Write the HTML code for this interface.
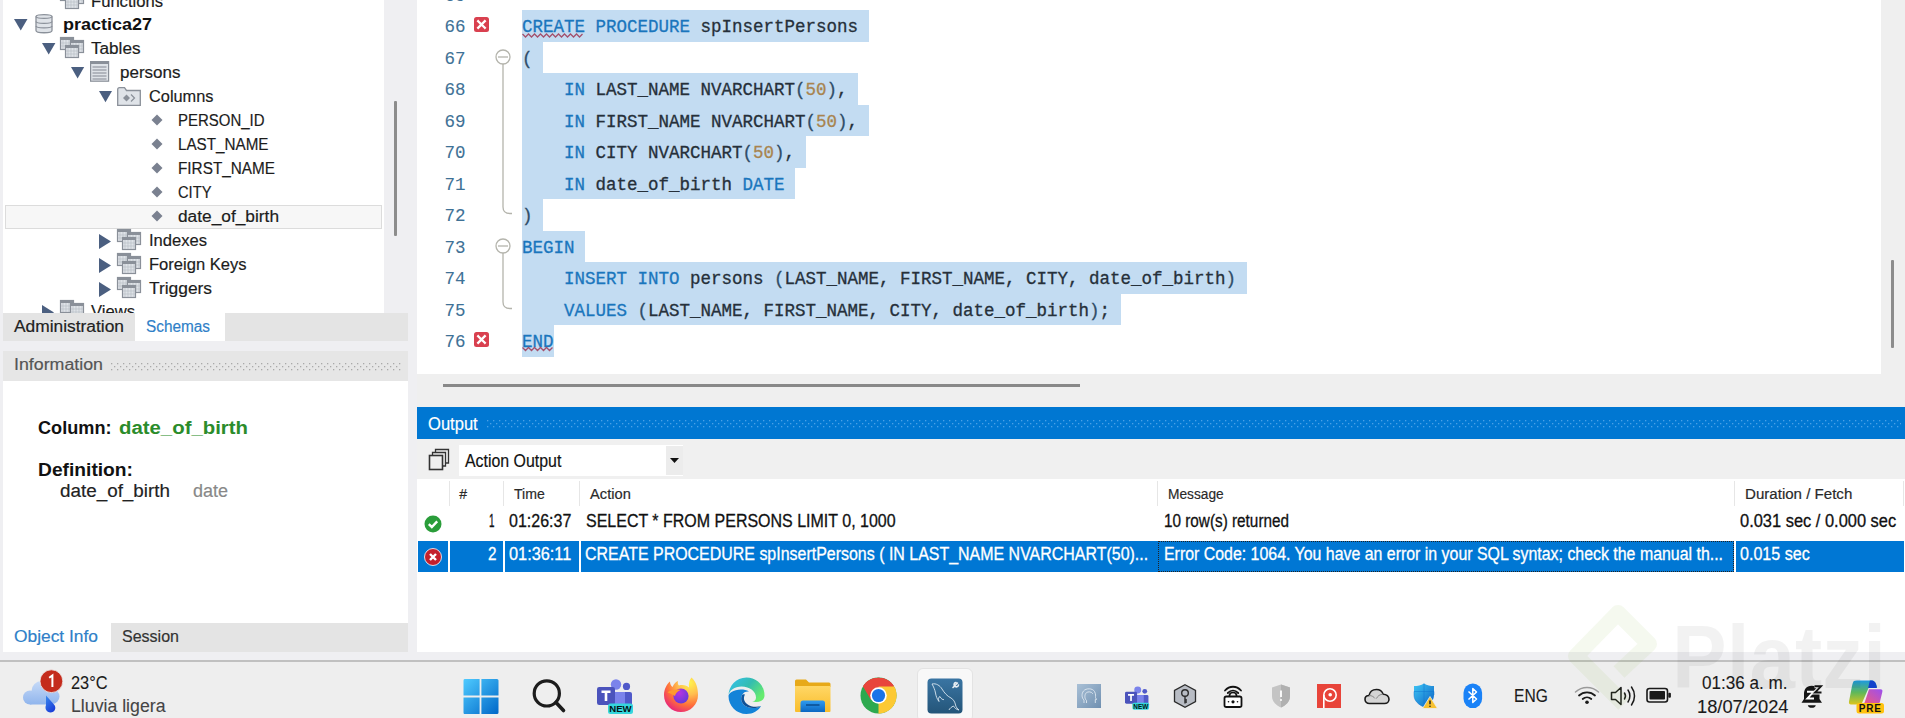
<!DOCTYPE html>
<html><head><meta charset="utf-8">
<style>
*{margin:0;padding:0;box-sizing:border-box}
html,body{width:1905px;height:718px;overflow:hidden;background:#efeff2;font-family:"Liberation Sans",sans-serif;position:relative}
.a{position:absolute}
.t{position:absolute;white-space:pre;line-height:1;-webkit-text-stroke:0.18px currentColor}
svg{position:absolute;overflow:visible}
</style></head>
<body>
<div class="a" style="left:3px;top:0px;width:381px;height:313px;background:#ffffff;"></div>
<div class="a" style="left:5px;top:205px;width:377px;height:24px;background:#f7f7f7;border:1px solid #dcdcdc"></div>
<div class="a" style="left:394px;top:101px;width:3px;height:135px;background:#8c8c8c;border-radius:1px"></div>
<div class="a" style="left:3px;top:313px;width:405px;height:28px;background:#e4e4e4;"></div>
<div class="a" style="left:135px;top:313px;width:90px;height:28px;background:#ffffff;"></div>
<div class="a" style="left:3px;top:351px;width:405px;height:30px;background:#e6e6e6;"></div>
<svg style="left:111px;top:362.5px" width="290" height="8"><defs><pattern id="dpi" width="6" height="6" patternUnits="userSpaceOnUse"><rect x="0" y="0" width="1.3" height="1.3" fill="#a9a9a9"/><rect x="3" y="3" width="1.3" height="1.3" fill="#a9a9a9"/></pattern></defs><rect width="290" height="8" fill="url(#dpi)"/></svg>
<div class="a" style="left:3px;top:381px;width:405px;height:242px;background:#ffffff;"></div>
<div class="a" style="left:3px;top:623px;width:108px;height:29px;background:#ffffff;"></div>
<div class="a" style="left:111px;top:623px;width:297px;height:29px;background:#e4e4e4;"></div>
<div class="a" style="left:417px;top:0px;width:1488px;height:407px;background:#efefef;"></div>
<div class="a" style="left:417px;top:0px;width:1464px;height:374px;background:#ffffff;"></div>
<div class="a" style="left:1891px;top:260px;width:3px;height:88px;background:#8c8c8c;border-radius:1px"></div>
<div class="a" style="left:443px;top:384px;width:637px;height:3px;background:#888888;"></div>
<div class="a" style="left:417px;top:407px;width:1488px;height:31.5px;background:#0077d2;"></div>
<svg style="left:486.5px;top:419.5px" width="1414" height="8"><defs><pattern id="dpo" width="6" height="6" patternUnits="userSpaceOnUse"><rect x="0" y="0" width="1.3" height="1.3" fill="#4ba1e6"/><rect x="3" y="3" width="1.3" height="1.3" fill="#4ba1e6"/></pattern></defs><rect width="1414" height="8" fill="url(#dpo)"/></svg>
<div class="a" style="left:417px;top:439px;width:1488px;height:40px;background:#f0f0f0;"></div>
<div class="a" style="left:459px;top:445px;width:224px;height:31px;background:#ffffff;"></div>
<div class="a" style="left:666px;top:446px;width:17px;height:29px;background:#ececec;"></div>
<svg style="left:670px;top:458px" width="9" height="5"><path d="M0 0H9L4.5 5Z" fill="#111"/></svg>
<div class="a" style="left:417px;top:479px;width:1488px;height:173px;background:#ffffff;"></div>
<div class="a" style="left:0px;top:660px;width:1905px;height:58px;background:#eeeeee;"></div>
<div class="a" style="left:0px;top:660px;width:1905px;height:2px;background:#c0c0c0;"></div>
<span id="t0" class="t" style="left:91px;top:-5.80px;font-family:'Liberation Sans', sans-serif;font-size:16px;font-weight:400;color:#1c1c1c;transform:scaleX(1.0378);transform-origin:0 0;">Functions</span>
<span id="t1" class="t" style="left:63px;top:17.40px;font-family:'Liberation Sans', sans-serif;font-size:16px;font-weight:700;color:#111;transform:scaleX(1.1241);transform-origin:0 0;-webkit-text-stroke:0;">practica27</span>
<span id="t2" class="t" style="left:91px;top:40.90px;font-family:'Liberation Sans', sans-serif;font-size:16px;font-weight:400;color:#1c1c1c;transform:scaleX(1.0703);transform-origin:0 0;">Tables</span>
<span id="t3" class="t" style="left:120px;top:64.90px;font-family:'Liberation Sans', sans-serif;font-size:16px;font-weight:400;color:#1c1c1c;transform:scaleX(1.0629);transform-origin:0 0;">persons</span>
<span id="t4" class="t" style="left:149px;top:88.90px;font-family:'Liberation Sans', sans-serif;font-size:16px;font-weight:400;color:#1c1c1c;transform:scaleX(1.0215);transform-origin:0 0;">Columns</span>
<span id="t5" class="t" style="left:177.5px;top:113.20px;font-family:'Liberation Sans', sans-serif;font-size:16px;font-weight:400;color:#1c1c1c;transform:scaleX(0.9355);transform-origin:0 0;">PERSON_ID</span>
<span id="t6" class="t" style="left:177.5px;top:137.20px;font-family:'Liberation Sans', sans-serif;font-size:16px;font-weight:400;color:#1c1c1c;transform:scaleX(0.9512);transform-origin:0 0;">LAST_NAME</span>
<span id="t7" class="t" style="left:177.5px;top:161.20px;font-family:'Liberation Sans', sans-serif;font-size:16px;font-weight:400;color:#1c1c1c;transform:scaleX(0.9571);transform-origin:0 0;">FIRST_NAME</span>
<span id="t8" class="t" style="left:177.5px;top:185.20px;font-family:'Liberation Sans', sans-serif;font-size:16px;font-weight:400;color:#1c1c1c;transform:scaleX(0.9190);transform-origin:0 0;">CITY</span>
<span id="t9" class="t" style="left:177.5px;top:209.20px;font-family:'Liberation Sans', sans-serif;font-size:16px;font-weight:400;color:#1c1c1c;transform:scaleX(1.0813);transform-origin:0 0;">date_of_birth</span>
<span id="t10" class="t" style="left:149px;top:233.20px;font-family:'Liberation Sans', sans-serif;font-size:16px;font-weight:400;color:#1c1c1c;transform:scaleX(1.0348);transform-origin:0 0;">Indexes</span>
<span id="t11" class="t" style="left:149px;top:257.20px;font-family:'Liberation Sans', sans-serif;font-size:16px;font-weight:400;color:#1c1c1c;transform:scaleX(1.0343);transform-origin:0 0;">Foreign Keys</span>
<span id="t12" class="t" style="left:149px;top:281.20px;font-family:'Liberation Sans', sans-serif;font-size:16px;font-weight:400;color:#1c1c1c;transform:scaleX(1.0845);transform-origin:0 0;">Triggers</span>
<span id="t13" class="t" style="left:13.5px;top:318.70px;font-family:'Liberation Sans', sans-serif;font-size:16px;font-weight:400;color:#222;transform:scaleX(1.0851);transform-origin:0 0;">Administration</span>
<span id="t14" class="t" style="left:146px;top:318.70px;font-family:'Liberation Sans', sans-serif;font-size:16px;font-weight:400;color:#2f7fc8;transform:scaleX(0.9595);transform-origin:0 0;">Schemas</span>
<span id="t15" class="t" style="left:14px;top:357.40px;font-family:'Liberation Sans', sans-serif;font-size:16px;font-weight:400;color:#555;transform:scaleX(1.1118);transform-origin:0 0;">Information</span>
<span id="t16" class="t" style="left:38px;top:419.00px;font-family:'Liberation Sans', sans-serif;font-size:18px;font-weight:700;color:#111;transform:scaleX(1.0071);transform-origin:0 0;-webkit-text-stroke:0;">Column:</span>
<span id="t17" class="t" style="left:119px;top:419.00px;font-family:'Liberation Sans', sans-serif;font-size:18px;font-weight:700;color:#2b8c2b;transform:scaleX(1.1314);transform-origin:0 0;-webkit-text-stroke:0;">date_of_birth</span>
<span id="t18" class="t" style="left:38px;top:460.70px;font-family:'Liberation Sans', sans-serif;font-size:18px;font-weight:700;color:#111;transform:scaleX(1.0676);transform-origin:0 0;-webkit-text-stroke:0;">Definition:</span>
<span id="t19" class="t" style="left:60px;top:481.70px;font-family:'Liberation Sans', sans-serif;font-size:18px;font-weight:400;color:#222;transform:scaleX(1.0467);transform-origin:0 0;">date_of_birth</span>
<span id="t20" class="t" style="left:193px;top:481.70px;font-family:'Liberation Sans', sans-serif;font-size:18px;font-weight:400;color:#888;transform:scaleX(0.9987);transform-origin:0 0;">date</span>
<span id="t21" class="t" style="left:14.3px;top:629.40px;font-family:'Liberation Sans', sans-serif;font-size:16px;font-weight:400;color:#2f7fc8;transform:scaleX(1.0856);transform-origin:0 0;">Object Info</span>
<span id="t22" class="t" style="left:122px;top:629.40px;font-family:'Liberation Sans', sans-serif;font-size:16px;font-weight:400;color:#333;transform:scaleX(1.0014);transform-origin:0 0;">Session</span>
<div class="a" style="left:522px;top:10.0px;width:346.5px;height:31.5px;background:#c3dcf2;"></div>
<div class="a" style="left:522px;top:41.5px;width:21.0px;height:31.5px;background:#c3dcf2;"></div>
<div class="a" style="left:522px;top:73.0px;width:336.0px;height:31.5px;background:#c3dcf2;"></div>
<div class="a" style="left:522px;top:104.5px;width:346.5px;height:31.5px;background:#c3dcf2;"></div>
<div class="a" style="left:522px;top:136.0px;width:283.5px;height:31.5px;background:#c3dcf2;"></div>
<div class="a" style="left:522px;top:167.5px;width:273.0px;height:31.5px;background:#c3dcf2;"></div>
<div class="a" style="left:522px;top:199.0px;width:21.0px;height:31.5px;background:#c3dcf2;"></div>
<div class="a" style="left:522px;top:230.5px;width:63.0px;height:31.5px;background:#c3dcf2;"></div>
<div class="a" style="left:522px;top:262.0px;width:724.5px;height:31.5px;background:#c3dcf2;"></div>
<div class="a" style="left:522px;top:293.5px;width:598.5px;height:31.5px;background:#c3dcf2;"></div>
<div class="a" style="left:522px;top:325.0px;width:31.5px;height:31.5px;background:#c3dcf2;"></div>
<span id="t23" class="t" style="left:444.5px;top:19.00px;font-family:'Liberation Mono', monospace;font-size:17.5px;font-weight:400;color:#3e7196;-webkit-text-stroke:0.1px currentColor">66</span>
<span id="t24" class="t" style="left:522.0px;top:19.00px;font-family:'Liberation Mono', monospace;font-size:17.5px;font-weight:400;color:#1a76bd;-webkit-text-stroke:0.3px currentColor">CREATE</span>
<span id="t25" class="t" style="left:595.5px;top:19.00px;font-family:'Liberation Mono', monospace;font-size:17.5px;font-weight:400;color:#1a76bd;-webkit-text-stroke:0.3px currentColor">PROCEDURE</span>
<span id="t26" class="t" style="left:690.0px;top:19.00px;font-family:'Liberation Mono', monospace;font-size:17.5px;font-weight:400;color:#26303a;-webkit-text-stroke:0.3px currentColor"> spInsertPersons</span>
<span id="t27" class="t" style="left:444.5px;top:50.50px;font-family:'Liberation Mono', monospace;font-size:17.5px;font-weight:400;color:#3e7196;-webkit-text-stroke:0.1px currentColor">67</span>
<span id="t28" class="t" style="left:522.0px;top:50.50px;font-family:'Liberation Mono', monospace;font-size:17.5px;font-weight:400;color:#2f4d68;-webkit-text-stroke:0.3px currentColor">(</span>
<span id="t29" class="t" style="left:444.5px;top:82.00px;font-family:'Liberation Mono', monospace;font-size:17.5px;font-weight:400;color:#3e7196;-webkit-text-stroke:0.1px currentColor">68</span>
<span id="t30" class="t" style="left:564.0px;top:82.00px;font-family:'Liberation Mono', monospace;font-size:17.5px;font-weight:400;color:#1a76bd;-webkit-text-stroke:0.3px currentColor">IN</span>
<span id="t31" class="t" style="left:585.0px;top:82.00px;font-family:'Liberation Mono', monospace;font-size:17.5px;font-weight:400;color:#26303a;-webkit-text-stroke:0.3px currentColor"> LAST_NAME NVARCHART</span>
<span id="t32" class="t" style="left:795.0px;top:82.00px;font-family:'Liberation Mono', monospace;font-size:17.5px;font-weight:400;color:#2f4d68;-webkit-text-stroke:0.3px currentColor">(</span>
<span id="t33" class="t" style="left:805.5px;top:82.00px;font-family:'Liberation Mono', monospace;font-size:17.5px;font-weight:400;color:#a8844f;-webkit-text-stroke:0.3px currentColor">50</span>
<span id="t34" class="t" style="left:826.5px;top:82.00px;font-family:'Liberation Mono', monospace;font-size:17.5px;font-weight:400;color:#2f4d68;-webkit-text-stroke:0.3px currentColor">)</span>
<span id="t35" class="t" style="left:837.0px;top:82.00px;font-family:'Liberation Mono', monospace;font-size:17.5px;font-weight:400;color:#26303a;-webkit-text-stroke:0.3px currentColor">,</span>
<span id="t36" class="t" style="left:444.5px;top:113.50px;font-family:'Liberation Mono', monospace;font-size:17.5px;font-weight:400;color:#3e7196;-webkit-text-stroke:0.1px currentColor">69</span>
<span id="t37" class="t" style="left:564.0px;top:113.50px;font-family:'Liberation Mono', monospace;font-size:17.5px;font-weight:400;color:#1a76bd;-webkit-text-stroke:0.3px currentColor">IN</span>
<span id="t38" class="t" style="left:585.0px;top:113.50px;font-family:'Liberation Mono', monospace;font-size:17.5px;font-weight:400;color:#26303a;-webkit-text-stroke:0.3px currentColor"> FIRST_NAME NVARCHART</span>
<span id="t39" class="t" style="left:805.5px;top:113.50px;font-family:'Liberation Mono', monospace;font-size:17.5px;font-weight:400;color:#2f4d68;-webkit-text-stroke:0.3px currentColor">(</span>
<span id="t40" class="t" style="left:816.0px;top:113.50px;font-family:'Liberation Mono', monospace;font-size:17.5px;font-weight:400;color:#a8844f;-webkit-text-stroke:0.3px currentColor">50</span>
<span id="t41" class="t" style="left:837.0px;top:113.50px;font-family:'Liberation Mono', monospace;font-size:17.5px;font-weight:400;color:#2f4d68;-webkit-text-stroke:0.3px currentColor">)</span>
<span id="t42" class="t" style="left:847.5px;top:113.50px;font-family:'Liberation Mono', monospace;font-size:17.5px;font-weight:400;color:#26303a;-webkit-text-stroke:0.3px currentColor">,</span>
<span id="t43" class="t" style="left:444.5px;top:145.00px;font-family:'Liberation Mono', monospace;font-size:17.5px;font-weight:400;color:#3e7196;-webkit-text-stroke:0.1px currentColor">70</span>
<span id="t44" class="t" style="left:564.0px;top:145.00px;font-family:'Liberation Mono', monospace;font-size:17.5px;font-weight:400;color:#1a76bd;-webkit-text-stroke:0.3px currentColor">IN</span>
<span id="t45" class="t" style="left:585.0px;top:145.00px;font-family:'Liberation Mono', monospace;font-size:17.5px;font-weight:400;color:#26303a;-webkit-text-stroke:0.3px currentColor"> CITY NVARCHART</span>
<span id="t46" class="t" style="left:742.5px;top:145.00px;font-family:'Liberation Mono', monospace;font-size:17.5px;font-weight:400;color:#2f4d68;-webkit-text-stroke:0.3px currentColor">(</span>
<span id="t47" class="t" style="left:753.0px;top:145.00px;font-family:'Liberation Mono', monospace;font-size:17.5px;font-weight:400;color:#a8844f;-webkit-text-stroke:0.3px currentColor">50</span>
<span id="t48" class="t" style="left:774.0px;top:145.00px;font-family:'Liberation Mono', monospace;font-size:17.5px;font-weight:400;color:#2f4d68;-webkit-text-stroke:0.3px currentColor">)</span>
<span id="t49" class="t" style="left:784.5px;top:145.00px;font-family:'Liberation Mono', monospace;font-size:17.5px;font-weight:400;color:#26303a;-webkit-text-stroke:0.3px currentColor">,</span>
<span id="t50" class="t" style="left:444.5px;top:176.50px;font-family:'Liberation Mono', monospace;font-size:17.5px;font-weight:400;color:#3e7196;-webkit-text-stroke:0.1px currentColor">71</span>
<span id="t51" class="t" style="left:564.0px;top:176.50px;font-family:'Liberation Mono', monospace;font-size:17.5px;font-weight:400;color:#1a76bd;-webkit-text-stroke:0.3px currentColor">IN</span>
<span id="t52" class="t" style="left:585.0px;top:176.50px;font-family:'Liberation Mono', monospace;font-size:17.5px;font-weight:400;color:#26303a;-webkit-text-stroke:0.3px currentColor"> date_of_birth </span>
<span id="t53" class="t" style="left:742.5px;top:176.50px;font-family:'Liberation Mono', monospace;font-size:17.5px;font-weight:400;color:#1a76bd;-webkit-text-stroke:0.3px currentColor">DATE</span>
<span id="t54" class="t" style="left:444.5px;top:208.00px;font-family:'Liberation Mono', monospace;font-size:17.5px;font-weight:400;color:#3e7196;-webkit-text-stroke:0.1px currentColor">72</span>
<span id="t55" class="t" style="left:522.0px;top:208.00px;font-family:'Liberation Mono', monospace;font-size:17.5px;font-weight:400;color:#2f4d68;-webkit-text-stroke:0.3px currentColor">)</span>
<span id="t56" class="t" style="left:444.5px;top:239.50px;font-family:'Liberation Mono', monospace;font-size:17.5px;font-weight:400;color:#3e7196;-webkit-text-stroke:0.1px currentColor">73</span>
<span id="t57" class="t" style="left:522.0px;top:239.50px;font-family:'Liberation Mono', monospace;font-size:17.5px;font-weight:400;color:#1a76bd;-webkit-text-stroke:0.3px currentColor">BEGIN</span>
<span id="t58" class="t" style="left:444.5px;top:271.00px;font-family:'Liberation Mono', monospace;font-size:17.5px;font-weight:400;color:#3e7196;-webkit-text-stroke:0.1px currentColor">74</span>
<span id="t59" class="t" style="left:564.0px;top:271.00px;font-family:'Liberation Mono', monospace;font-size:17.5px;font-weight:400;color:#1a76bd;-webkit-text-stroke:0.3px currentColor">INSERT</span>
<span id="t60" class="t" style="left:637.5px;top:271.00px;font-family:'Liberation Mono', monospace;font-size:17.5px;font-weight:400;color:#1a76bd;-webkit-text-stroke:0.3px currentColor">INTO</span>
<span id="t61" class="t" style="left:679.5px;top:271.00px;font-family:'Liberation Mono', monospace;font-size:17.5px;font-weight:400;color:#26303a;-webkit-text-stroke:0.3px currentColor"> persons </span>
<span id="t62" class="t" style="left:774.0px;top:271.00px;font-family:'Liberation Mono', monospace;font-size:17.5px;font-weight:400;color:#2f4d68;-webkit-text-stroke:0.3px currentColor">(</span>
<span id="t63" class="t" style="left:784.5px;top:271.00px;font-family:'Liberation Mono', monospace;font-size:17.5px;font-weight:400;color:#26303a;-webkit-text-stroke:0.3px currentColor">LAST_NAME, FIRST_NAME, CITY, date_of_birth</span>
<span id="t64" class="t" style="left:1225.5px;top:271.00px;font-family:'Liberation Mono', monospace;font-size:17.5px;font-weight:400;color:#2f4d68;-webkit-text-stroke:0.3px currentColor">)</span>
<span id="t65" class="t" style="left:444.5px;top:302.50px;font-family:'Liberation Mono', monospace;font-size:17.5px;font-weight:400;color:#3e7196;-webkit-text-stroke:0.1px currentColor">75</span>
<span id="t66" class="t" style="left:564.0px;top:302.50px;font-family:'Liberation Mono', monospace;font-size:17.5px;font-weight:400;color:#1a76bd;-webkit-text-stroke:0.3px currentColor">VALUES</span>
<span id="t67" class="t" style="left:637.5px;top:302.50px;font-family:'Liberation Mono', monospace;font-size:17.5px;font-weight:400;color:#2f4d68;-webkit-text-stroke:0.3px currentColor">(</span>
<span id="t68" class="t" style="left:648.0px;top:302.50px;font-family:'Liberation Mono', monospace;font-size:17.5px;font-weight:400;color:#26303a;-webkit-text-stroke:0.3px currentColor">LAST_NAME, FIRST_NAME, CITY, date_of_birth</span>
<span id="t69" class="t" style="left:1089.0px;top:302.50px;font-family:'Liberation Mono', monospace;font-size:17.5px;font-weight:400;color:#2f4d68;-webkit-text-stroke:0.3px currentColor">)</span>
<span id="t70" class="t" style="left:1099.5px;top:302.50px;font-family:'Liberation Mono', monospace;font-size:17.5px;font-weight:400;color:#26303a;-webkit-text-stroke:0.3px currentColor">;</span>
<span id="t71" class="t" style="left:444.5px;top:334.00px;font-family:'Liberation Mono', monospace;font-size:17.5px;font-weight:400;color:#3e7196;-webkit-text-stroke:0.1px currentColor">76</span>
<span id="t72" class="t" style="left:522.0px;top:334.00px;font-family:'Liberation Mono', monospace;font-size:17.5px;font-weight:400;color:#1a76bd;-webkit-text-stroke:0.3px currentColor">END</span>
<svg style="left:474px;top:17px" width="15" height="15"><rect x="0" y="0" width="15" height="15" rx="2.5" fill="#d9404f"/><path d="M4.2 4.2L10.8 10.8M10.8 4.2L4.2 10.8" stroke="#fff" stroke-width="2.3" stroke-linecap="square"/></svg>
<svg style="left:474px;top:332px" width="15" height="15"><rect x="0" y="0" width="15" height="15" rx="2.5" fill="#d9404f"/><path d="M4.2 4.2L10.8 10.8M10.8 4.2L4.2 10.8" stroke="#fff" stroke-width="2.3" stroke-linecap="square"/></svg>
<svg style="left:0;top:0" width="1" height="1"><path d="M522.5 34 L525.5 37 L528.5 34 L531.5 37 L534.5 34 L537.5 37 L540.5 34 L543.5 37 L546.5 34 L549.5 37 L552.5 34 L555.5 37 L558.5 34 L561.5 37 L564.5 34 L567.5 37 L570.5 34 L573.5 37 L576.5 34 L579.5 37 L582.5 34" fill="none" stroke="#a4506c" stroke-width="1.3"/></svg>
<svg style="left:0;top:0" width="1" height="1"><path d="M522.5 347.5 L525.5 350.5 L528.5 347.5 L531.5 350.5 L534.5 347.5 L537.5 350.5 L540.5 347.5 L543.5 350.5 L546.5 347.5 L549.5 350.5 L552.5 347.5" fill="none" stroke="#a4506c" stroke-width="1.3"/></svg>
<span id="t73" class="t" style="left:444.5px;top:-12.50px;font-family:'Liberation Mono', monospace;font-size:17.5px;font-weight:400;color:#3e7196;-webkit-text-stroke:0.1px currentColor">65</span>
<svg style="left:0;top:0" width="1" height="1"><circle cx="503" cy="57" r="7" fill="#fff" stroke="#b4b4ac" stroke-width="1.3"/><path d="M498 57H508" stroke="#b4b4ac" stroke-width="1.3"/><path d="M503 64V207Q503 213.5 510 213.5H512" fill="none" stroke="#b4b4ac" stroke-width="1.3"/><circle cx="503" cy="246" r="7" fill="#fff" stroke="#b4b4ac" stroke-width="1.3"/><path d="M498 246H508" stroke="#b4b4ac" stroke-width="1.3"/><path d="M503 253V302Q503 308.5 510 308.5H512" fill="none" stroke="#b4b4ac" stroke-width="1.3"/></svg>
<span id="t74" class="t" style="left:427.8px;top:415.10px;font-family:'Liberation Sans', sans-serif;font-size:18px;font-weight:400;color:#ffffff;transform:scaleX(0.9196);transform-origin:0 0;">Output</span>
<span id="t75" class="t" style="left:464.8px;top:451.90px;font-family:'Liberation Sans', sans-serif;font-size:18px;font-weight:400;color:#111;transform:scaleX(0.8829);transform-origin:0 0;">Action Output</span>
<div class="a" style="left:449px;top:481px;width:1px;height:25px;background:#e6e6e6;"></div>
<div class="a" style="left:503px;top:481px;width:1px;height:25px;background:#e6e6e6;"></div>
<div class="a" style="left:579px;top:481px;width:1px;height:25px;background:#e6e6e6;"></div>
<div class="a" style="left:1157px;top:481px;width:1px;height:25px;background:#e6e6e6;"></div>
<div class="a" style="left:1734px;top:481px;width:1px;height:25px;background:#e6e6e6;"></div>
<div class="a" style="left:1903px;top:481px;width:1px;height:25px;background:#e6e6e6;"></div>
<span id="t76" class="t" style="left:459.3px;top:486.60px;font-family:'Liberation Sans', sans-serif;font-size:14px;font-weight:400;color:#2a2a2a;">#</span>
<span id="t77" class="t" style="left:513.6px;top:486.60px;font-family:'Liberation Sans', sans-serif;font-size:14px;font-weight:400;color:#2a2a2a;transform:scaleX(1.0067);transform-origin:0 0;">Time</span>
<span id="t78" class="t" style="left:589.8px;top:486.60px;font-family:'Liberation Sans', sans-serif;font-size:14px;font-weight:400;color:#2a2a2a;transform:scaleX(1.0483);transform-origin:0 0;">Action</span>
<span id="t79" class="t" style="left:1167.7px;top:486.60px;font-family:'Liberation Sans', sans-serif;font-size:14px;font-weight:400;color:#2a2a2a;transform:scaleX(0.9804);transform-origin:0 0;">Message</span>
<span id="t80" class="t" style="left:1744.9px;top:486.60px;font-family:'Liberation Sans', sans-serif;font-size:14px;font-weight:400;color:#2a2a2a;transform:scaleX(1.0772);transform-origin:0 0;">Duration / Fetch</span>
<span id="t81" class="t" style="left:488.8px;top:511.70px;font-family:'Liberation Sans', sans-serif;font-size:18px;font-weight:400;color:#111;transform:scaleX(0.5491);transform-origin:0 0;-webkit-text-stroke:0.3px currentColor">1</span>
<span id="t82" class="t" style="left:508.7px;top:511.70px;font-family:'Liberation Sans', sans-serif;font-size:18px;font-weight:400;color:#111;transform:scaleX(0.8890);transform-origin:0 0;-webkit-text-stroke:0.3px currentColor">01:26:37</span>
<span id="t83" class="t" style="left:585.6px;top:511.70px;font-family:'Liberation Sans', sans-serif;font-size:18px;font-weight:400;color:#111;transform:scaleX(0.8885);transform-origin:0 0;-webkit-text-stroke:0.3px currentColor">SELECT * FROM PERSONS LIMIT 0, 1000</span>
<span id="t84" class="t" style="left:1163.5px;top:511.70px;font-family:'Liberation Sans', sans-serif;font-size:18px;font-weight:400;color:#111;transform:scaleX(0.8500);transform-origin:0 0;-webkit-text-stroke:0.3px currentColor">10 row(s) returned</span>
<span id="t85" class="t" style="left:1740px;top:511.70px;font-family:'Liberation Sans', sans-serif;font-size:18px;font-weight:400;color:#111;transform:scaleX(0.9128);transform-origin:0 0;-webkit-text-stroke:0.3px currentColor">0.031 sec / 0.000 sec</span>
<div class="a" style="left:418px;top:541px;width:1486px;height:31px;background:#0077d4;"></div>
<div class="a" style="left:448px;top:541px;width:2px;height:31px;background:#ffffff;"></div>
<div class="a" style="left:503px;top:541px;width:2px;height:31px;background:#ffffff;"></div>
<div class="a" style="left:579px;top:541px;width:2px;height:31px;background:#ffffff;"></div>
<div class="a" style="left:1734px;top:541px;width:2px;height:31px;background:#ffffff;"></div>
<div class="a" style="left:1158px;top:541px;width:576px;height:31px;border:1px dotted #222"></div>
<span id="t86" class="t" style="left:487.5px;top:545.00px;font-family:'Liberation Sans', sans-serif;font-size:18px;font-weight:400;color:#fff;transform:scaleX(0.8487);transform-origin:0 0;-webkit-text-stroke:0.3px currentColor">2</span>
<span id="t87" class="t" style="left:508.7px;top:545.00px;font-family:'Liberation Sans', sans-serif;font-size:18px;font-weight:400;color:#fff;transform:scaleX(0.9064);transform-origin:0 0;-webkit-text-stroke:0.3px currentColor">01:36:11</span>
<span id="t88" class="t" style="left:584.7px;top:545.00px;font-family:'Liberation Sans', sans-serif;font-size:18px;font-weight:400;color:#fff;transform:scaleX(0.8866);transform-origin:0 0;-webkit-text-stroke:0.3px currentColor">CREATE PROCEDURE spInsertPersons ( IN LAST_NAME NVARCHART(50)...</span>
<span id="t89" class="t" style="left:1163.5px;top:545.00px;font-family:'Liberation Sans', sans-serif;font-size:18px;font-weight:400;color:#fff;transform:scaleX(0.8835);transform-origin:0 0;-webkit-text-stroke:0.3px currentColor">Error Code: 1064. You have an error in your SQL syntax; check the manual th...</span>
<span id="t90" class="t" style="left:1740px;top:545.00px;font-family:'Liberation Sans', sans-serif;font-size:18px;font-weight:400;color:#fff;transform:scaleX(0.8929);transform-origin:0 0;-webkit-text-stroke:0.3px currentColor">0.015 sec</span>
<svg style="left:424px;top:515px" width="18" height="18"><circle cx="9" cy="9" r="8.5" fill="#2a9d3a"/><path d="M4.8 9.2L7.8 12L13.2 6.3" fill="none" stroke="#fff" stroke-width="2.4"/></svg>
<svg style="left:424px;top:548px" width="18" height="18"><circle cx="9" cy="9" r="8.5" fill="#c4202c" stroke="#fff" stroke-width="0.8"/><path d="M6 6L12 12M12 6L6 12" stroke="#fff" stroke-width="2.4"/></svg>
<svg style="left:428px;top:448px" width="22" height="23"><rect x="1.5" y="7.5" width="13" height="14" fill="none" stroke="#333" stroke-width="1.6"/><path d="M4.5 7V4.5H17.5V18H15" fill="none" stroke="#333" stroke-width="1.3"/><path d="M7.5 4V1.5H20.5V15H18" fill="none" stroke="#333" stroke-width="1.3"/></svg>
<span id="t91" class="t" style="left:70.5px;top:674.73px;font-family:'Liberation Sans', sans-serif;font-size:17.5px;font-weight:400;color:#1a1a1a;transform:scaleX(0.9333);transform-origin:0 0;-webkit-text-stroke:0.1px currentColor">23°C</span>
<span id="t92" class="t" style="left:70.5px;top:698.42px;font-family:'Liberation Sans', sans-serif;font-size:17.5px;font-weight:400;color:#444;transform:scaleX(1.0119);transform-origin:0 0;-webkit-text-stroke:0.1px currentColor">Lluvia ligera</span>
<span id="t93" class="t" style="left:1513.7px;top:687.92px;font-family:'Liberation Sans', sans-serif;font-size:17.5px;font-weight:400;color:#1a1a1a;transform:scaleX(0.8909);transform-origin:0 0;-webkit-text-stroke:0.1px currentColor">ENG</span>
<span id="t94" class="t" style="left:1702.4px;top:674.62px;font-family:'Liberation Sans', sans-serif;font-size:17.5px;font-weight:400;color:#1a1a1a;transform:scaleX(0.9776);transform-origin:0 0;-webkit-text-stroke:0.1px currentColor">01:36 a. m.</span>
<span id="t95" class="t" style="left:1696.5px;top:698.83px;font-family:'Liberation Sans', sans-serif;font-size:17.5px;font-weight:400;color:#1a1a1a;transform:scaleX(1.0446);transform-origin:0 0;-webkit-text-stroke:0.1px currentColor">18/07/2024</span>
<div class="a" style="left:0;top:0;width:384px;height:313px;overflow:hidden">
<svg style="left:13.5px;top:18.5px;" width="13.5" height="11.5" viewBox="0 0 13.5 11.5"><path d="M0 0H13.5L6.75 11.5Z" fill="#4b5f80"/></svg>
<svg style="left:42px;top:42.8px;" width="13.4" height="11.6" viewBox="0 0 13.4 11.6"><path d="M0 0H13.4L6.7 11.6Z" fill="#4b5f80"/></svg>
<svg style="left:70.5px;top:67px;" width="13.2" height="11.5" viewBox="0 0 13.2 11.5"><path d="M0 0H13.2L6.6 11.5Z" fill="#4b5f80"/></svg>
<svg style="left:99.2px;top:91px;" width="13" height="11.2" viewBox="0 0 13 11.2"><path d="M0 0H13L6.5 11.2Z" fill="#4b5f80"/></svg>
<svg style="left:99px;top:233.5px;" width="12" height="15" viewBox="0 0 12 15"><path d="M0 0L12 7.5L0 15Z" fill="#4b5f80"/></svg>
<svg style="left:99px;top:257.5px;" width="12" height="15" viewBox="0 0 12 15"><path d="M0 0L12 7.5L0 15Z" fill="#4b5f80"/></svg>
<svg style="left:99px;top:281.5px;" width="12" height="15" viewBox="0 0 12 15"><path d="M0 0L12 7.5L0 15Z" fill="#4b5f80"/></svg>
<svg style="left:42px;top:305px;" width="12" height="15" viewBox="0 0 12 15"><path d="M0 0L12 7.5L0 15Z" fill="#4b5f80"/></svg>
<svg style="left:60px;top:-12px;" width="24" height="21" viewBox="0 0 24 21"><rect x="0.5" y="0.5" width="13" height="12" fill="#dfe3e8" stroke="#8a9099" stroke-width="1.2"/><rect x="0" y="0" width="14" height="3" fill="#8a9099"/><path d="M1 6H13" stroke="#b9bec6" stroke-width="0.7"/><path d="M1 9H13" stroke="#b9bec6" stroke-width="0.7"/><path d="M3 3V12" stroke="#b9bec6" stroke-width="0.7"/><path d="M6 3V12" stroke="#b9bec6" stroke-width="0.7"/><path d="M9 3V12" stroke="#b9bec6" stroke-width="0.7"/><path d="M12 3V12" stroke="#b9bec6" stroke-width="0.7"/><rect x="10.5" y="3.5" width="13" height="12" fill="#dfe3e8" stroke="#8a9099" stroke-width="1.2"/><rect x="10" y="3" width="14" height="3" fill="#8a9099"/><path d="M11 9H23" stroke="#b9bec6" stroke-width="0.7"/><path d="M11 12H23" stroke="#b9bec6" stroke-width="0.7"/><path d="M13 6V15" stroke="#b9bec6" stroke-width="0.7"/><path d="M16 6V15" stroke="#b9bec6" stroke-width="0.7"/><path d="M19 6V15" stroke="#b9bec6" stroke-width="0.7"/><path d="M22 6V15" stroke="#b9bec6" stroke-width="0.7"/><rect x="5.5" y="8.5" width="13" height="12" fill="#dfe3e8" stroke="#8a9099" stroke-width="1.2"/><rect x="5" y="8" width="14" height="3" fill="#8a9099"/><path d="M6 14H18" stroke="#b9bec6" stroke-width="0.7"/><path d="M6 17H18" stroke="#b9bec6" stroke-width="0.7"/><path d="M8 11V20" stroke="#b9bec6" stroke-width="0.7"/><path d="M11 11V20" stroke="#b9bec6" stroke-width="0.7"/><path d="M14 11V20" stroke="#b9bec6" stroke-width="0.7"/><path d="M17 11V20" stroke="#b9bec6" stroke-width="0.7"/></svg>
<svg style="left:34.5px;top:12.5px;" width="18" height="21" viewBox="0 0 18 21"><path d="M1 3.5C1 1 17 1 17 3.5V17.5C17 20.5 1 20.5 1 17.5Z" fill="#dfe3e8" stroke="#8a9099" stroke-width="1.3"/><path d="M1 3.5C1 6 17 6 17 3.5M1 8.5C1 11 17 11 17 8.5M1 13C1 15.5 17 15.5 17 13" fill="none" stroke="#8a9099" stroke-width="1.2"/></svg>
<svg style="left:60px;top:37px;" width="24" height="21" viewBox="0 0 24 21"><rect x="0.5" y="0.5" width="13" height="12" fill="#dfe3e8" stroke="#8a9099" stroke-width="1.2"/><rect x="0" y="0" width="14" height="3" fill="#8a9099"/><path d="M1 6H13" stroke="#b9bec6" stroke-width="0.7"/><path d="M1 9H13" stroke="#b9bec6" stroke-width="0.7"/><path d="M3 3V12" stroke="#b9bec6" stroke-width="0.7"/><path d="M6 3V12" stroke="#b9bec6" stroke-width="0.7"/><path d="M9 3V12" stroke="#b9bec6" stroke-width="0.7"/><path d="M12 3V12" stroke="#b9bec6" stroke-width="0.7"/><rect x="10.5" y="3.5" width="13" height="12" fill="#dfe3e8" stroke="#8a9099" stroke-width="1.2"/><rect x="10" y="3" width="14" height="3" fill="#8a9099"/><path d="M11 9H23" stroke="#b9bec6" stroke-width="0.7"/><path d="M11 12H23" stroke="#b9bec6" stroke-width="0.7"/><path d="M13 6V15" stroke="#b9bec6" stroke-width="0.7"/><path d="M16 6V15" stroke="#b9bec6" stroke-width="0.7"/><path d="M19 6V15" stroke="#b9bec6" stroke-width="0.7"/><path d="M22 6V15" stroke="#b9bec6" stroke-width="0.7"/><rect x="5.5" y="8.5" width="13" height="12" fill="#dfe3e8" stroke="#8a9099" stroke-width="1.2"/><rect x="5" y="8" width="14" height="3" fill="#8a9099"/><path d="M6 14H18" stroke="#b9bec6" stroke-width="0.7"/><path d="M6 17H18" stroke="#b9bec6" stroke-width="0.7"/><path d="M8 11V20" stroke="#b9bec6" stroke-width="0.7"/><path d="M11 11V20" stroke="#b9bec6" stroke-width="0.7"/><path d="M14 11V20" stroke="#b9bec6" stroke-width="0.7"/><path d="M17 11V20" stroke="#b9bec6" stroke-width="0.7"/></svg>
<svg style="left:90.2px;top:61px;" width="19" height="21" viewBox="0 0 19 21"><rect x="0.6" y="0.6" width="18" height="19.6" fill="#dfe3e8" stroke="#8a9099" stroke-width="1.2"/><rect x="0" y="0" width="19" height="3" fill="#8a9099"/><path d="M2.5 6H16.5" stroke="#8a9099" stroke-width="1.1"/><path d="M2.5 9H16.5" stroke="#8a9099" stroke-width="1.1"/><path d="M2.5 12H16.5" stroke="#8a9099" stroke-width="1.1"/><path d="M2.5 15H16.5" stroke="#8a9099" stroke-width="1.1"/><path d="M2.5 18H16.5" stroke="#8a9099" stroke-width="1.1"/></svg>
<svg style="left:117px;top:86.5px;" width="24" height="19" viewBox="0 0 24 19"><path d="M0.7 2.5Q0.7 0.7 2.5 0.7H7.5L9.5 3.5H23.3V18.3H0.7Z" fill="#dfe3e8" stroke="#8a9099" stroke-width="1.3"/><path d="M6 11L9.5 7.5L13 11L9.5 14.5Z" fill="#8a9099"/><path d="M14 7.5L17.5 11L14 14.5" fill="none" stroke="#8a9099" stroke-width="1.2"/></svg>
<svg style="left:150.5px;top:114px;" width="12" height="12" viewBox="0 0 12 12"><path d="M6 0.5L11.5 6L6 11.5L0.5 6Z" fill="#7a8190"/></svg>
<svg style="left:150.5px;top:138px;" width="12" height="12" viewBox="0 0 12 12"><path d="M6 0.5L11.5 6L6 11.5L0.5 6Z" fill="#7a8190"/></svg>
<svg style="left:150.5px;top:162px;" width="12" height="12" viewBox="0 0 12 12"><path d="M6 0.5L11.5 6L6 11.5L0.5 6Z" fill="#7a8190"/></svg>
<svg style="left:150.5px;top:186px;" width="12" height="12" viewBox="0 0 12 12"><path d="M6 0.5L11.5 6L6 11.5L0.5 6Z" fill="#7a8190"/></svg>
<svg style="left:150.5px;top:210px;" width="12" height="12" viewBox="0 0 12 12"><path d="M6 0.5L11.5 6L6 11.5L0.5 6Z" fill="#7a8190"/></svg>
<svg style="left:117px;top:229px;" width="24" height="21" viewBox="0 0 24 21"><rect x="0.5" y="0.5" width="13" height="12" fill="#dfe3e8" stroke="#8a9099" stroke-width="1.2"/><rect x="0" y="0" width="14" height="3" fill="#8a9099"/><path d="M1 6H13" stroke="#b9bec6" stroke-width="0.7"/><path d="M1 9H13" stroke="#b9bec6" stroke-width="0.7"/><path d="M3 3V12" stroke="#b9bec6" stroke-width="0.7"/><path d="M6 3V12" stroke="#b9bec6" stroke-width="0.7"/><path d="M9 3V12" stroke="#b9bec6" stroke-width="0.7"/><path d="M12 3V12" stroke="#b9bec6" stroke-width="0.7"/><rect x="10.5" y="3.5" width="13" height="12" fill="#dfe3e8" stroke="#8a9099" stroke-width="1.2"/><rect x="10" y="3" width="14" height="3" fill="#8a9099"/><path d="M11 9H23" stroke="#b9bec6" stroke-width="0.7"/><path d="M11 12H23" stroke="#b9bec6" stroke-width="0.7"/><path d="M13 6V15" stroke="#b9bec6" stroke-width="0.7"/><path d="M16 6V15" stroke="#b9bec6" stroke-width="0.7"/><path d="M19 6V15" stroke="#b9bec6" stroke-width="0.7"/><path d="M22 6V15" stroke="#b9bec6" stroke-width="0.7"/><rect x="5.5" y="8.5" width="13" height="12" fill="#dfe3e8" stroke="#8a9099" stroke-width="1.2"/><rect x="5" y="8" width="14" height="3" fill="#8a9099"/><path d="M6 14H18" stroke="#b9bec6" stroke-width="0.7"/><path d="M6 17H18" stroke="#b9bec6" stroke-width="0.7"/><path d="M8 11V20" stroke="#b9bec6" stroke-width="0.7"/><path d="M11 11V20" stroke="#b9bec6" stroke-width="0.7"/><path d="M14 11V20" stroke="#b9bec6" stroke-width="0.7"/><path d="M17 11V20" stroke="#b9bec6" stroke-width="0.7"/></svg>
<svg style="left:117px;top:253px;" width="24" height="21" viewBox="0 0 24 21"><rect x="0.5" y="0.5" width="13" height="12" fill="#dfe3e8" stroke="#8a9099" stroke-width="1.2"/><rect x="0" y="0" width="14" height="3" fill="#8a9099"/><path d="M1 6H13" stroke="#b9bec6" stroke-width="0.7"/><path d="M1 9H13" stroke="#b9bec6" stroke-width="0.7"/><path d="M3 3V12" stroke="#b9bec6" stroke-width="0.7"/><path d="M6 3V12" stroke="#b9bec6" stroke-width="0.7"/><path d="M9 3V12" stroke="#b9bec6" stroke-width="0.7"/><path d="M12 3V12" stroke="#b9bec6" stroke-width="0.7"/><rect x="10.5" y="3.5" width="13" height="12" fill="#dfe3e8" stroke="#8a9099" stroke-width="1.2"/><rect x="10" y="3" width="14" height="3" fill="#8a9099"/><path d="M11 9H23" stroke="#b9bec6" stroke-width="0.7"/><path d="M11 12H23" stroke="#b9bec6" stroke-width="0.7"/><path d="M13 6V15" stroke="#b9bec6" stroke-width="0.7"/><path d="M16 6V15" stroke="#b9bec6" stroke-width="0.7"/><path d="M19 6V15" stroke="#b9bec6" stroke-width="0.7"/><path d="M22 6V15" stroke="#b9bec6" stroke-width="0.7"/><rect x="5.5" y="8.5" width="13" height="12" fill="#dfe3e8" stroke="#8a9099" stroke-width="1.2"/><rect x="5" y="8" width="14" height="3" fill="#8a9099"/><path d="M6 14H18" stroke="#b9bec6" stroke-width="0.7"/><path d="M6 17H18" stroke="#b9bec6" stroke-width="0.7"/><path d="M8 11V20" stroke="#b9bec6" stroke-width="0.7"/><path d="M11 11V20" stroke="#b9bec6" stroke-width="0.7"/><path d="M14 11V20" stroke="#b9bec6" stroke-width="0.7"/><path d="M17 11V20" stroke="#b9bec6" stroke-width="0.7"/></svg>
<svg style="left:117px;top:277px;" width="24" height="21" viewBox="0 0 24 21"><rect x="0.5" y="0.5" width="13" height="12" fill="#dfe3e8" stroke="#8a9099" stroke-width="1.2"/><rect x="0" y="0" width="14" height="3" fill="#8a9099"/><path d="M1 6H13" stroke="#b9bec6" stroke-width="0.7"/><path d="M1 9H13" stroke="#b9bec6" stroke-width="0.7"/><path d="M3 3V12" stroke="#b9bec6" stroke-width="0.7"/><path d="M6 3V12" stroke="#b9bec6" stroke-width="0.7"/><path d="M9 3V12" stroke="#b9bec6" stroke-width="0.7"/><path d="M12 3V12" stroke="#b9bec6" stroke-width="0.7"/><rect x="10.5" y="3.5" width="13" height="12" fill="#dfe3e8" stroke="#8a9099" stroke-width="1.2"/><rect x="10" y="3" width="14" height="3" fill="#8a9099"/><path d="M11 9H23" stroke="#b9bec6" stroke-width="0.7"/><path d="M11 12H23" stroke="#b9bec6" stroke-width="0.7"/><path d="M13 6V15" stroke="#b9bec6" stroke-width="0.7"/><path d="M16 6V15" stroke="#b9bec6" stroke-width="0.7"/><path d="M19 6V15" stroke="#b9bec6" stroke-width="0.7"/><path d="M22 6V15" stroke="#b9bec6" stroke-width="0.7"/><rect x="5.5" y="8.5" width="13" height="12" fill="#dfe3e8" stroke="#8a9099" stroke-width="1.2"/><rect x="5" y="8" width="14" height="3" fill="#8a9099"/><path d="M6 14H18" stroke="#b9bec6" stroke-width="0.7"/><path d="M6 17H18" stroke="#b9bec6" stroke-width="0.7"/><path d="M8 11V20" stroke="#b9bec6" stroke-width="0.7"/><path d="M11 11V20" stroke="#b9bec6" stroke-width="0.7"/><path d="M14 11V20" stroke="#b9bec6" stroke-width="0.7"/><path d="M17 11V20" stroke="#b9bec6" stroke-width="0.7"/></svg>
<svg style="left:60px;top:300px;" width="24" height="21" viewBox="0 0 24 21"><rect x="0.5" y="0.5" width="13" height="12" fill="#dfe3e8" stroke="#8a9099" stroke-width="1.2"/><rect x="0" y="0" width="14" height="3" fill="#8a9099"/><path d="M1 6H13" stroke="#b9bec6" stroke-width="0.7"/><path d="M1 9H13" stroke="#b9bec6" stroke-width="0.7"/><path d="M3 3V12" stroke="#b9bec6" stroke-width="0.7"/><path d="M6 3V12" stroke="#b9bec6" stroke-width="0.7"/><path d="M9 3V12" stroke="#b9bec6" stroke-width="0.7"/><path d="M12 3V12" stroke="#b9bec6" stroke-width="0.7"/><rect x="10.5" y="3.5" width="13" height="12" fill="#dfe3e8" stroke="#8a9099" stroke-width="1.2"/><rect x="10" y="3" width="14" height="3" fill="#8a9099"/><path d="M11 9H23" stroke="#b9bec6" stroke-width="0.7"/><path d="M11 12H23" stroke="#b9bec6" stroke-width="0.7"/><path d="M13 6V15" stroke="#b9bec6" stroke-width="0.7"/><path d="M16 6V15" stroke="#b9bec6" stroke-width="0.7"/><path d="M19 6V15" stroke="#b9bec6" stroke-width="0.7"/><path d="M22 6V15" stroke="#b9bec6" stroke-width="0.7"/></svg>
<span id="t96" class="t" style="left:91px;top:304.40px;font-family:'Liberation Sans', sans-serif;font-size:16px;font-weight:400;color:#1c1c1c;transform:scaleX(1.0380);transform-origin:0 0;">Views</span>
</div>
<svg style="left:22px;top:668px" width="42" height="48" viewBox="0 0 42 48"><defs><linearGradient id="cl" gradientUnits="userSpaceOnUse" x1="0" y1="12" x2="0" y2="37"><stop offset="0" stop-color="#c9dcf8"/><stop offset="1" stop-color="#8fb4ec"/></linearGradient><linearGradient id="dr" x1="0" y1="0" x2="0.6" y2="1"><stop offset="0" stop-color="#3b8cf0"/><stop offset="1" stop-color="#1a3fd8"/></linearGradient></defs><g fill="url(#cl)"><circle cx="19.5" cy="23" r="10"/><circle cx="8" cy="29.5" r="7"/><circle cx="30" cy="28.5" r="7.5"/><rect x="8" y="26" width="22" height="10.5"/></g><path d="M24 27.5L32 36.5C35 40 32.5 44.5 28.5 44.5C24.5 44.5 22.5 40.5 24 37Z" fill="url(#dr)"/><circle cx="29.4" cy="13.2" r="11.4" fill="#c42b1c" stroke="#eeeeee" stroke-width="0.8"/><path d="M27.2 9.8L30.4 7.4V19" fill="none" stroke="#fff" stroke-width="2"/></svg>
<svg style="left:463px;top:679px" width="36" height="35" viewBox="0 0 36 35"><defs><linearGradient id="wg" x1="0" y1="0" x2="1" y2="1"><stop offset="0" stop-color="#4fcbff"/><stop offset="1" stop-color="#0067c8"/></linearGradient></defs><path d="M1.5 0H16.6V16.6H0.5V1.5Q0.5 0 1.5 0ZM18.4 0H34Q35.5 0 35.5 1.5V16.6H18.4ZM0.5 18.4H16.6V35H1.5Q0.5 35 0.5 33.5ZM18.4 18.4H35.5V33.5Q35.5 35 34 35H18.4Z" fill="url(#wg)"/></svg>
<svg style="left:530px;top:677px" width="38" height="38" viewBox="0 0 38 38"><circle cx="16.8" cy="16.4" r="12.6" fill="none" stroke="#1c1c1c" stroke-width="3.2"/><path d="M26 25.5L33.5 33.5" stroke="#1c1c1c" stroke-width="3.6" stroke-linecap="round"/></svg>
<svg style="left:597px;top:677px" width="36.0" height="37.0" viewBox="0 0 36 37"><circle cx="19" cy="7.5" r="5.2" fill="#7b83eb"/><circle cx="29.5" cy="9.4" r="3.6" fill="#5059c9"/><path d="M17 15H33Q35 15 35 17V27Q35 31 30 31H17Z" fill="#5059c9"/><path d="M14 15H28V29Q28 33 22 33H14Z" fill="#7b83eb"/><rect x="0" y="10" width="18" height="18" rx="2.2" fill="#4b53bc"/><path d="M4.5 14.8H13.5M9 14.8V24" stroke="#fff" stroke-width="2.6"/><rect x="11" y="26.4" width="25" height="10.6" rx="2.5" fill="#35d6dc"/><text x="23.5" y="35.4" text-anchor="middle" font-family="Liberation Sans" font-weight="700" font-size="9.6" fill="#041416">NEW</text></svg>
<svg style="left:663px;top:677px" width="36" height="36" viewBox="0 0 36 36"><defs><radialGradient id="ff1" cx="0.75" cy="0.15" r="1"><stop offset="0" stop-color="#fff44f"/><stop offset="0.35" stop-color="#ffbd4f"/><stop offset="0.65" stop-color="#ff7139"/><stop offset="1" stop-color="#e31587"/></radialGradient><radialGradient id="ff2" cx="0.4" cy="0.3" r="0.8"><stop offset="0" stop-color="#b833e1"/><stop offset="1" stop-color="#5b3bd6"/></radialGradient></defs><path d="M18 35C8.5 35 1 27.5 1 18C1 12 4 7 7 4.5C7 7 8 9 9.5 10C11 6.5 13 5 15 4C14.5 6 15 7.5 16 8.5C20 7.5 24 8.5 26 10.5C25.5 7 26 3 28.5 0.5C33.5 5 35 11.5 35 18C35 27.5 27.5 35 18 35Z" fill="url(#ff1)"/><circle cx="18" cy="19" r="7.6" fill="url(#ff2)"/><path d="M4.5 15.5C8 12.5 13 12 17.5 13C14 14.5 12.5 16.5 12 19C9 17 6.5 16 4.5 15.5Z" fill="#ff9a2e"/></svg>
<svg style="left:728px;top:677px" width="38" height="38" viewBox="0 0 38 38"><defs><linearGradient id="eg1" x1="0" y1="0" x2="1" y2="0.6"><stop offset="0" stop-color="#35c1f1"/><stop offset="0.55" stop-color="#34bdb0"/><stop offset="1" stop-color="#66eb6e"/></linearGradient><linearGradient id="eg2" x1="0" y1="0" x2="0.6" y2="1"><stop offset="0" stop-color="#0c59a4"/><stop offset="1" stop-color="#114a8b"/></linearGradient></defs><path d="M36.5 18.5C36.5 8 28.5 0.5 18.5 0.5C8 0.5 0.5 9 0.5 19C0.5 13.5 7 9.5 13.5 9.5C22 9.5 28 14.5 28 20.5C28 23 26.5 24.5 24 24.5C30.5 26 36.5 24 36.5 18.5Z" fill="url(#eg1)"/><path d="M0.5 19C0.5 29 8.5 37 18.5 37C25 37 30.5 33.5 33 29C30 31 24 32 19.5 30C13.5 27.5 12 22 14 18C15.5 15 18.5 14 21 14.5C16 11.5 8 12 3.5 15C1.5 16.5 0.5 17.5 0.5 19Z" fill="#1383d8"/><path d="M14 18C12 22 13.5 27.5 19.5 30C24 32 30 31 33 29C29 30.5 22.5 30 19 27C16 24.5 15 21 17 17.5C17 17.5 15 16.5 14 18Z" fill="url(#eg2)"/></svg>
<svg style="left:794px;top:679px" width="38" height="34" viewBox="0 0 38 34"><defs><linearGradient id="xg" x1="0" y1="0" x2="0" y2="1"><stop offset="0" stop-color="#ffd766"/><stop offset="1" stop-color="#f9bd2b"/></linearGradient><linearGradient id="xb" x1="0" y1="0" x2="0" y2="1"><stop offset="0" stop-color="#2f9bf0"/><stop offset="1" stop-color="#0b67c2"/></linearGradient></defs><path d="M1 2Q1 0.5 2.5 0.5H12L15 3.5H35Q36.5 3.5 36.5 5V8H1Z" fill="#e7a919"/><path d="M1 7H36.5V32Q36.5 33 35.5 33H2Q1 33 1 32Z" fill="url(#xg)"/><path d="M6.5 33V24Q6.5 21.5 9 21.5H28.5Q31 21.5 31 24V33Z" fill="url(#xb)"/><path d="M12 26H25.5" stroke="#0b4f94" stroke-width="1.6"/></svg>
<svg style="left:860px;top:677px" width="38" height="38" viewBox="0 0 38 38"><circle cx="18.5" cy="18.5" r="18" fill="#2da94f"/><path d="M18.5 18.5L3 9.5A18 18 0 0 1 34 9.5Z" fill="#e8453c"/><path d="M18.5 18.5L34 9.5A18 18 0 0 1 18.5 36.5Z" fill="#fcc934"/><path d="M18.5 9.5H34A18 18 0 0 0 3 9.5L11 23Z" fill="#e8453c"/><path d="M26.3 23L18.5 36.5A18 18 0 0 0 34 9.5H18.5Z" fill="#fcc934"/><circle cx="18.5" cy="18.5" r="8.3" fill="#fff"/><circle cx="18.5" cy="18.5" r="6.6" fill="#1a73e8"/></svg>
<div class="a" style="left:917px;top:668px;width:56px;height:54px;background:#f8f8f8;border:1px solid #e3e3e3;border-radius:6px"></div>
<svg style="left:927px;top:678px" width="36" height="36" viewBox="0 0 36 36"><defs><linearGradient id="mg" x1="0" y1="0" x2="0" y2="1"><stop offset="0" stop-color="#3a75a3"/><stop offset="1" stop-color="#245579"/></linearGradient></defs><rect x="0.5" y="0.5" width="35" height="35" rx="4" fill="url(#mg)"/><path d="M5 6C9 5 13 7.5 15 11C17.5 15 20 18 24 20C26.5 21.5 28 24 28.5 27C29 29 30.5 31 32 32C29.5 31.5 27.5 30 26.5 28M5 6C6.5 8.5 8 12 8.5 15C9 18 10 21 12 23.5C11 21 11.5 19 13 18.5C14 21 16 22 17 21.5M26.5 28C24.5 29 22.5 30.5 22 32" fill="none" stroke="#d9e6f0" stroke-width="0.9"/><path d="M26 9.5L30.5 5M29 4.5A2.2 2.2 0 1 0 31.5 7" fill="none" stroke="#e8eef3" stroke-width="1.6" stroke-linecap="round"/></svg>
<svg style="left:1077px;top:684px" width="24" height="24" viewBox="0 0 24 24"><defs><linearGradient id="a1" x1="0" y1="0" x2="1" y2="1"><stop offset="0" stop-color="#a9c0d6"/><stop offset="1" stop-color="#6f8fb0"/></linearGradient></defs><rect width="24" height="24" fill="url(#a1)"/><path d="M7 19V16C4.5 14 4.5 9.5 6.5 7C9 4 15.5 4 17.5 7.5C19 10 18.5 12.5 18.5 13.5L19.5 15.5H18.3V19M9.5 19V16.5C7.5 15 7.3 10.5 9.3 8.8C11 7.3 14.5 7.5 15.8 9.8" fill="none" stroke="#dfe8f0" stroke-width="0.9"/></svg>
<svg style="left:1124.5px;top:685px" width="24.12" height="24.790000000000003" viewBox="0 0 36 37"><circle cx="19" cy="7.5" r="5.2" fill="#7b83eb"/><circle cx="29.5" cy="9.4" r="3.6" fill="#5059c9"/><path d="M17 15H33Q35 15 35 17V27Q35 31 30 31H17Z" fill="#5059c9"/><path d="M14 15H28V29Q28 33 22 33H14Z" fill="#7b83eb"/><rect x="0" y="10" width="18" height="18" rx="2.2" fill="#4b53bc"/><path d="M4.5 14.8H13.5M9 14.8V24" stroke="#fff" stroke-width="2.6"/><rect x="11" y="26.4" width="25" height="10.6" rx="2.5" fill="#35d6dc"/><text x="23.5" y="35.4" text-anchor="middle" font-family="Liberation Sans" font-weight="700" font-size="9.6" fill="#041416">NEW</text></svg>
<svg style="left:1173px;top:684px" width="24" height="24" viewBox="0 0 24 24"><path d="M12 0.8L22.5 6.4V17.6L12 23.2L1.5 17.6V6.4Z" fill="#b8bcc4" stroke="#2b2b2b" stroke-width="1.3"/><circle cx="12" cy="9" r="3.3" fill="none" stroke="#2b2b2b" stroke-width="1.4"/><path d="M12 12.3V19.5M12 16H14M12 18H14" stroke="#2b2b2b" stroke-width="1.4"/></svg>
<svg style="left:1223px;top:684px" width="20" height="24" viewBox="0 0 20 24"><path d="M2 6.5C6.5 1.5 13.5 1.5 18 6.5M4.8 9C8 5.8 12 5.8 15.2 9" fill="none" stroke="#111" stroke-width="1.8" stroke-linecap="round"/><path d="M6.5 13V11.5C6.5 7.5 13.5 7.5 13.5 11.5V13" fill="none" stroke="#111" stroke-width="1.7"/><rect x="1.5" y="12.5" width="17" height="10.5" rx="1.8" fill="#fff" stroke="#111" stroke-width="1.8"/><circle cx="10" cy="17.8" r="1.6" fill="#111"/><circle cx="5.5" cy="17.8" r="0.8" fill="#111"/><circle cx="14.5" cy="17.8" r="0.8" fill="#111"/></svg>
<svg style="left:1271px;top:684px" width="20" height="24" viewBox="0 0 20 24"><path d="M10 0.5L19 3.5V12C19 18 14.5 21.5 10 23.5C5.5 21.5 1 18 1 12V3.5Z" fill="#c4c4c4"/><path d="M10 0.5L19 3.5V12C19 18 14.5 21.5 10 23.5Z" fill="#b0b0b0"/><path d="M10 6.5V13" stroke="#fff" stroke-width="1.8"/><circle cx="10" cy="16" r="1" fill="#fff"/></svg>
<svg style="left:1317px;top:684px" width="24" height="24" viewBox="0 0 24 24"><rect width="24" height="24" fill="#e8443a"/><circle cx="13" cy="11" r="6.2" fill="none" stroke="#fff" stroke-width="1.6"/><path d="M6.8 11V24" stroke="#fff" stroke-width="1.6"/><circle cx="13.2" cy="10.8" r="1.8" fill="#fff"/></svg>
<svg style="left:1364px;top:686px" width="26" height="20" viewBox="0 0 26 20"><path d="M5.5 17.5C2.5 17.5 1 15.5 1 13.3C1 11 2.8 9.5 5 9.5C5.7 6 8.5 3.5 12.5 3.5C15.7 3.5 18.2 5.5 19.2 8.2C22.5 8.2 25 10.5 25 13.2C25 15.8 23 17.5 20.5 17.5Z" fill="#d5d5d5" stroke="#1a1a1a" stroke-width="1.6"/><path d="M5 9.5C8 9.5 10 11 11 12.5M19.2 8.2C16 8.2 13.5 10 12.5 12.5" fill="none" stroke="#888" stroke-width="1"/></svg>
<svg style="left:1412px;top:683px" width="26" height="26" viewBox="0 0 26 26"><defs><linearGradient id="df" x1="0" y1="0" x2="1" y2="1"><stop offset="0" stop-color="#3fc6f5"/><stop offset="1" stop-color="#0b62c4"/></linearGradient></defs><path d="M12 0.5C15 2.5 18.5 3 22 3V12C22 18 17 22 12 24C7 22 2 18 2 12V3C5.5 3 9 2.5 12 0.5Z" fill="url(#df)"/><path d="M12 0.5V24C7 22 2 18 2 12V8.5H22V12" fill="none" stroke="#0e74d0" stroke-width="0.8" opacity="0.6"/><path d="M18 13.5L25.5 25.5H10.5Z" fill="#f7c131" stroke="#eeeeee" stroke-width="0.8"/><path d="M18 17.5V21.3" stroke="#222" stroke-width="1.5"/><circle cx="18" cy="23.3" r="0.8" fill="#222"/></svg>
<svg style="left:1463px;top:683px" width="20" height="26" viewBox="0 0 20 26"><rect x="0.5" y="0.5" width="18.6" height="24.6" rx="9.3" fill="#1a82f7"/><path d="M5.5 8.5L13.5 16L9.8 19.5V5.5L13.5 9L5.5 16.5" fill="none" stroke="#fff" stroke-width="1.5" stroke-linejoin="round"/></svg>
<svg style="left:1574px;top:685px" width="26" height="20" viewBox="0 0 26 20"><path d="M1.5 7C8 1 18 1 24.5 7" fill="none" stroke="#9a9a9a" stroke-width="1.5" stroke-linecap="round"/><path d="M5 10.5C9.5 6.3 16.5 6.3 21 10.5M8.7 14C11.2 11.8 14.8 11.8 17.3 14" fill="none" stroke="#1a1a1a" stroke-width="1.8" stroke-linecap="round"/><circle cx="13" cy="17.3" r="1.8" fill="#1a1a1a"/></svg>
<svg style="left:1610px;top:685px" width="26" height="22" viewBox="0 0 26 22"><path d="M1.5 7.5H5.5L11 2.5V19.5L5.5 14.5H1.5Z" fill="none" stroke="#1a1a1a" stroke-width="1.5" stroke-linejoin="round"/><path d="M14.5 8C15.7 9.8 15.7 12.2 14.5 14M18 5C20.5 8.5 20.5 13.5 18 17M21.5 2C25.5 7.5 25.5 14.5 21.5 20" fill="none" stroke="#1a1a1a" stroke-width="1.5" stroke-linecap="round"/></svg>
<svg style="left:1646px;top:687px" width="26" height="17" viewBox="0 0 26 17"><rect x="1" y="1.5" width="20.5" height="13.5" rx="2.5" fill="none" stroke="#1a1a1a" stroke-width="1.6"/><rect x="3.5" y="4" width="15.5" height="8.5" rx="0.8" fill="#1a1a1a"/><rect x="22.3" y="5.8" width="2.6" height="5" rx="1" fill="#1a1a1a"/></svg>
<svg style="left:1795px;top:675px" width="30" height="36" viewBox="0 0 30 36"><path d="M16.8 10.8C11 10.8 9 15 9 19V24L6.5 27.8H27L24.5 24V19C24.5 15 22.5 10.8 16.8 10.8Z" fill="#151515"/><path d="M12.8 30.2H20.8Q20 32.8 16.8 32.8Q13.6 32.8 12.8 30.2Z" fill="#151515"/><path d="M12 16.8H18.5L12.3 23.5H19" fill="none" stroke="#fff" stroke-width="1.9"/><path d="M19.5 11.3H26L20 17.5H26.5" fill="none" stroke="#eeeeee" stroke-width="4"/><path d="M19.5 11.3H26L20 17.5H26.5" fill="none" stroke="#151515" stroke-width="1.9"/></svg>
<svg style="left:1846px;top:678px" width="40" height="38" viewBox="0 0 40 38"><defs><linearGradient id="cp1" x1="0" y1="0" x2="0" y2="1"><stop offset="0" stop-color="#1c9ae0"/><stop offset="0.5" stop-color="#5fb85a"/><stop offset="1" stop-color="#dcc51c"/></linearGradient><linearGradient id="cp2" x1="1" y1="0" x2="0" y2="1"><stop offset="0" stop-color="#9b4ff0"/><stop offset="1" stop-color="#f45a78"/></linearGradient></defs><path d="M8 3Q8.5 2.5 11 2.5H26Q28.5 2.5 30 6L31 9H23L16 25Q15.3 26.5 13.5 26.5H5Q2.5 26.5 3 23.5L6 8Q7 3.5 8 3Z" fill="url(#cp1)"/><path d="M24 2.5H26Q28.5 2.5 30 6L31 10H22Z" fill="#1546d6"/><path d="M23 11.3H34.5Q37 11.3 36.3 14L34 23.5Q33.3 26.5 30.5 26.5H16.5Q18 26 18.8 24Z" fill="url(#cp2)"/><rect x="10.5" y="25" width="27.5" height="10.5" rx="2.5" fill="#ffc20e"/><text x="24.3" y="34" text-anchor="middle" font-family="Liberation Sans" font-weight="700" font-size="10" fill="#111" letter-spacing="0.8">PRE</text></svg>
<svg style="left:0;top:0" width="1" height="1"><path d="M1619 672L1649 644L1618 613L1576 656L1624 704" fill="none" stroke="rgba(120,170,40,0.075)" stroke-width="16" stroke-linejoin="round"/></svg>
<span id="t97" class="t" style="left:1672px;top:612.95px;font-family:'Liberation Sans', sans-serif;font-size:89px;font-weight:700;color:rgba(0,0,0,0.05);transform:scaleX(0.9206);transform-origin:0 0;-webkit-text-stroke:0;">Platzi</span>
</body></html>
